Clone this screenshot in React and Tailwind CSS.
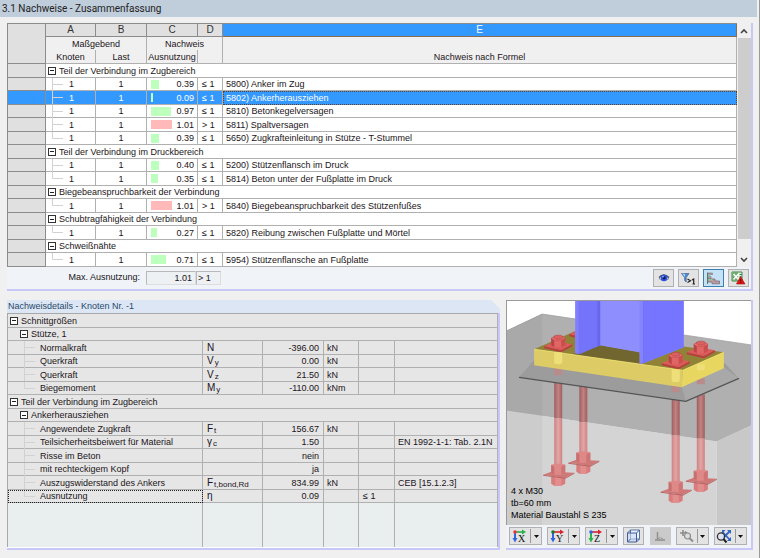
import React, { useState } from "react";

const groups = [
  {
    title: "Teil der Verbindung im Zugbereich",
    rows: [
      { value: 0.39, code: "5800", text: "Anker im Zug" },
      { value: 0.09, code: "5802", text: "Ankerherausziehen" },
      { value: 0.97, code: "5810", text: "Betonkegelversagen" },
      { value: 1.01, code: "5811", text: "Spaltversagen" },
      { value: 0.39, code: "5650", text: "Zugkrafteinleitung in Stütze - T-Stummel" },
    ],
  },
  {
    title: "Teil der Verbindung im Druckbereich",
    rows: [
      { value: 0.4, code: "5200", text: "Stützenflansch im Druck" },
      { value: 0.35, code: "5814", text: "Beton unter der Fußplatte im Druck" },
    ],
  },
  {
    title: "Biegebeanspruchbarkeit der Verbindung",
    rows: [{ value: 1.01, code: "5840", text: "Biegebeanspruchbarkeit des Stützenfußes" }],
  },
  {
    title: "Schubtragfähigkeit der Verbindung",
    rows: [{ value: 0.27, code: "5820", text: "Reibung zwischen Fußplatte und Mörtel" }],
  },
  {
    title: "Schweißnähte",
    rows: [{ value: 0.71, code: "5954", text: "Stützenflansche an Fußplatte" }],
  },
];

const details = [
  { level: 0, label: "Schnittgrößen" },
  { level: 1, label: "Stütze, 1" },
  { label: "Normalkraft", sym: "N", value: "-396.00", unit: "kN" },
  { label: "Querkraft", sym: "V", sub: "y", value: "0.00", unit: "kN" },
  { label: "Querkraft", sym: "V", sub: "z", value: "21.50", unit: "kN" },
  { label: "Biegemoment", sym: "M", sub: "y", value: "-110.00", unit: "kNm", last: true },
  { level: 0, label: "Teil der Verbindung im Zugbereich" },
  { level: 1, label: "Ankerherausziehen" },
  { label: "Angewendete Zugkraft", sym: "F", sub: "t", value: "156.67", unit: "kN" },
  { label: "Teilsicherheitsbeiwert für Material", sym: "γ", sub: "c", value: "1.50", ref: "EN 1992-1-1: Tab. 2.1N" },
  { label: "Risse im Beton", value: "nein" },
  { label: "mit rechteckigem Kopf", value: "ja" },
  { label: "Auszugswiderstand des Ankers", sym: "F", sub: "t,bond,Rd", value: "834.99", unit: "kN", ref: "CEB [15.1.2.3]" },
  { label: "Ausnutzung", sym: "η", value: "0.09", limit: "≤ 1", last: true, focused: true },
];

const Toggle = ({ label }) => (
  <button
    type="button"
    aria-label={`${label} zuklappen`}
    className="flex w-[8px] h-[8px] shrink-0 items-center justify-center border border-[#333] bg-white"
  >
    <span className="w-[4px] h-px bg-[#222]" />
  </button>
);

const TreeLine = ({ last }) => (
  <svg width="12" height="13" viewBox="0 0 12 13" className="shrink-0" aria-hidden="true">
    <path d={last ? "M.5 0V6.5H11" : "M.5 0V13M.5 6.5H11"} fill="none" stroke="#d2d2d2" />
  </svg>
);

const SummaryRow = ({ row, last, selected, onSelect }) => {
  const line = `border-b border-r border-[#b0b0b0] ${selected ? "bg-[#3399ff]" : "bg-white"}`;
  return (
    <tr
      onClick={onSelect}
      className={`odd:h-[14px] even:h-[13px] ${selected ? "text-white" : "text-[#1c1420]"}`}
    >
      <th className={`border-b border-r border-[#8c8c8c] p-0 ${selected ? "bg-[#3399ff]" : "bg-[#e0e0e0]"}`} />
      <td className={`p-0 ${line}`}>
        <div className="flex h-[12px] items-center pl-[6px]">
          <TreeLine last={last} />
          <span className="pl-[5px]">1</span>
        </div>
      </td>
      <td className={`p-0 text-center ${line}`}>1</td>
      <td className={`p-0 ${line}`}>
        <div className="flex h-[12px] items-center justify-between pl-[4px] pr-[3px]">
          <span className="flex w-[22px] shrink-0">
            <span
              className={`h-[9px] shrink-0 ${row.value > 1 ? "bg-[#ffb9b9]" : "bg-[#bdffbd]"}`}
              style={{ width: Math.round(row.value * 21) }}
            />
          </span>
          {row.value.toFixed(2)}
        </div>
      </td>
      <td className={`p-0 pl-[4px] ${line}`}>{row.value > 1 ? "> 1" : "≤ 1"}</td>
      <td
        className={`p-0 pl-[3px] ${
          selected ? "bg-[#3399ff] outline-1 -outline-offset-1 outline-dotted outline-[#6b3c14]" : line
        }`}
      >
        {row.code}) {row.text}
      </td>
    </tr>
  );
};

const SummaryTable = () => {
  const [selected, setSelected] = useState("5802");
  const letter = "h-[13px] border-b border-r border-[#8c8c8c] bg-[#e0e0e0] p-0 text-[10px] font-normal text-[#333]";
  const head = "bg-[#f0f0f0] p-0 font-normal";

  return (
    <table className="w-full table-fixed border-separate border-spacing-0 border-l border-t border-[#8c8c8c] leading-[12px]">
      <colgroup>
        <col className="w-[38px]" />
        <col className="w-[50px]" />
        <col className="w-[51px]" />
        <col className="w-[51px]" />
        <col className="w-[25px]" />
        <col />
      </colgroup>
      <thead>
        <tr>
          <th rowSpan={3} className="border-b border-r border-[#8c8c8c] bg-[#e0e0e0] p-0" />
          <th className={letter}>A</th>
          <th className={letter}>B</th>
          <th className={letter}>C</th>
          <th className={letter}>D</th>
          <th className="border-b border-r border-[#8c6a50] bg-[#3399ff] p-0 text-[10px] font-normal text-white">E</th>
        </tr>
        <tr className="h-[13px]">
          <th colSpan={2} className={`border-r border-[#b0b0b0] ${head}`}>Maßgebend</th>
          <th colSpan={2} className={`border-r border-[#b0b0b0] ${head}`}>Nachweis</th>
          <th className={`border-r border-[#b0b0b0] ${head}`} />
        </tr>
        <tr className="h-[14px]">
          <th className={`border-b border-r border-[#b0b0b0] ${head}`}>Knoten</th>
          <th className={`border-b border-r border-[#b0b0b0] ${head}`}>Last</th>
          <th className={`border-b border-r border-[#b0b0b0] ${head}`}>Ausnutzung</th>
          <th className={`border-b border-r border-[#b0b0b0] ${head}`} />
          <th className={`border-b border-r border-[#b0b0b0] ${head}`}>Nachweis nach Formel</th>
        </tr>
      </thead>
      <tbody>
        {groups.map((group) => [
          <tr key={group.title} className="odd:h-[14px] even:h-[13px]">
            <th className="border-b border-r border-[#8c8c8c] bg-[#e0e0e0] p-0" />
            <td colSpan={5} className="border-b border-r border-[#b0b0b0] bg-white p-0">
              <div className="flex h-[12px] items-center gap-[3px] pl-[2px]">
                <Toggle label={group.title} />
                {group.title}
              </div>
            </td>
          </tr>,
          ...group.rows.map((row, i) => (
            <SummaryRow
              key={row.code}
              row={row}
              last={i === group.rows.length - 1}
              selected={selected === row.code}
              onSelect={() => setSelected(row.code)}
            />
          )),
        ])}
      </tbody>
    </table>
  );
};

const ScrollBar = () => (
  <div className="flex w-[14px] shrink-0 flex-col bg-[#f0f0f0]">
    <button type="button" aria-label="Nach oben" className="flex h-[15px] items-center justify-center">
      <svg width="8" height="6" viewBox="0 0 8 6">
        <path d="M1 5L4 2L7 5" fill="none" stroke="#444" strokeWidth="1.6" />
      </svg>
    </button>
    <div className="ml-px flex-1 bg-[#cdcdcd]" />
    <button type="button" aria-label="Nach unten" className="flex h-[28px] items-end justify-center pb-[4px]">
      <svg width="8" height="6" viewBox="0 0 8 6">
        <path d="M1 1L4 4L7 1" fill="none" stroke="#444" strokeWidth="1.6" />
      </svg>
    </button>
  </div>
);

const EyeIcon = () => (
  <svg width="14" height="12" viewBox="0 0 14 12">
    <path d="M2 6.5Q6.5 1 12 6.5Q7 10.5 2 6.5Z" fill="#cdd6f2" stroke="#777d92" strokeWidth=".8" />
    <path d="M2 5.5Q6.5 0 12 5.5" fill="none" stroke="#444b60" strokeWidth="1.2" />
    <circle cx="7" cy="6" r="3.2" fill="#2853e0" />
    <circle cx="7" cy="6" r="1.4" fill="#061350" />
    <circle cx="6" cy="4.8" r=".8" fill="#bcd0ff" />
  </svg>
);

const FilterIcon = () => (
  <svg width="15" height="13" viewBox="0 0 15 13">
    <path d="M.5 1.5H8L5.2 5.5V10L3.6 8.5V5.5Z" fill="#4d8cd9" stroke="#45658f" strokeWidth=".7" />
    <path d="M1.5 1.5L3.8 5V2Z" fill="#c7e2fa" />
    <path d="M6.5 7L9.5 8.8L6.5 10.6M11 8L12.7 7V12M11.5 12H14" fill="none" stroke="#222" strokeWidth="1.2" />
  </svg>
);

const BarsIcon = () => (
  <svg width="15" height="13" viewBox="0 0 15 13">
    <path d="M2 1H6.5V2.5H2ZM2 4.5H5V7H2Z" fill="#b59ca5" stroke="#7a6d78" strokeWidth=".6" />
    <path d="M2 2.5H4V4.5H2Z" fill="#8fca94" />
    <path d="M2 7H9V9H13.5V11.8H6V10H2Z" fill="#bd9ba2" stroke="#7a6d78" strokeWidth=".8" />
    <path d="M2 7H6V8.5H2Z" fill="#8fca94" />
    <path d="M1.5 .5V12" stroke="#557a66" />
  </svg>
);

const ExcelIcon = () => (
  <svg width="15" height="14" viewBox="0 0 15 14">
    <path d="M1 1H11V10H1Z" fill="#dcefdc" stroke="#3c874a" />
    <path d="M1 1H7V10H1Z" fill="#6dab70" />
    <path d="M2.5 3L7.5 8.5M7.5 3L2.5 8.5" stroke="#fff" strokeWidth="1.5" />
    <path d="M8.5 3.5H11M8.5 6H11" stroke="#3c874a" />
    <path d="M9.5 5.5L14 13H5.5Z" fill="#e31313" stroke="#a90808" strokeWidth=".6" />
    <path d="M9.7 8V10.4M9.7 11V12" stroke="#5a0000" />
  </svg>
);

const IconButton = ({ label, active, disabled, children }) => (
  <button
    type="button"
    aria-label={label}
    disabled={disabled}
    className={`flex w-[21px] h-[18px] items-center justify-center border ${
      active ? "border-[#3c7fb1] bg-[#c4e1f5]" : disabled ? "border-[#cacaca] bg-[#cacaca]" : "border-[#b0b0b0] bg-[#e3e3e3]"
    }`}
  >
    {children}
  </button>
);

const SplitButton = ({ label, children }) => (
  <div className="flex h-[18px] w-[33px] border border-[#b0b0b0] bg-[#e3e3e3]">
    <button type="button" aria-label={label} className="flex flex-1 items-center justify-center">
      {children}
    </button>
    <button
      type="button"
      aria-label={`${label} Auswahl`}
      className="my-px flex w-[11px] items-center justify-center border-l border-[#999]"
    >
      <svg width="5" height="3" viewBox="0 0 5 3">
        <path d="M0 0H5L2.5 3Z" fill="#111" />
      </svg>
    </button>
  </div>
);

const AxisIcon = ({ across, down, letter, dot }) => (
  <svg width="16" height="15" viewBox="0 0 16 15">
    <path d="M3 3H11" stroke={across} strokeWidth="1.6" />
    <path d="M10 .5L14 3L10 5.5Z" fill={across} />
    <path d="M3 3V10" stroke={down} strokeWidth="2" />
    <path d="M.5 9H5.5L3 13.5Z" fill={down} />
    <circle cx="3" cy="3" r="1.8" fill={dot} />
    <text x="6" y="13" fontFamily="Liberation Serif, serif" fontSize="10" fill="#111">
      {letter}
    </text>
  </svg>
);

const CubeIcon = () => (
  <svg width="15" height="14" viewBox="0 0 15 14">
    <path d="M4.5 1H13.5V10H4.5Z" fill="#edf4ff" stroke="#5475a8" />
    <path d="M1.5 4H10.5V13H1.5Z" fill="#c9daf6" fillOpacity=".6" stroke="#405f96" />
    <path d="M1.5 4L4.5 1M10.5 4L13.5 1M10.5 13L13.5 10M1.5 13L4.5 10" stroke="#405f96" />
  </svg>
);

const SupportIcon = () => (
  <svg width="14" height="12" viewBox="0 0 14 12">
    <path d="M4.5 2V9M2 10H12" stroke="#8d8d8d" strokeWidth="1.4" />
    <path d="M5 9Q7.5 6 10 9" fill="none" stroke="#969696" />
  </svg>
);

const ZoomIcon = () => (
  <svg width="16" height="14" viewBox="0 0 16 14">
    <path d="M1 4H7M4 1V7M6 2.5L9 5" stroke="#8d8d8d" strokeWidth="1.6" />
    <circle cx="8.5" cy="7" r="3" fill="#ddd" stroke="#8d8d8d" strokeWidth="1.2" />
    <path d="M10.8 9.5L14 12.5" stroke="#8d8d8d" strokeWidth="2" />
  </svg>
);

const ResetIcon = () => (
  <svg width="17" height="15" viewBox="0 0 17 15">
    <path d="M6.5 3L14 11M14 2L7 9" stroke="#2e65c7" strokeWidth="1.8" />
    <path d="M11 1H15V5ZM6 1V5L9.5 1ZM11 12H15V8Z" fill="#2e65c7" />
    <circle cx="5" cy="7.5" r="3.6" fill="#d9e5f5" fillOpacity=".8" stroke="#333" strokeWidth="1.3" />
    <path d="M7.5 10L10.5 13.5" stroke="#222" strokeWidth="2" />
  </svg>
);

const SummaryPanel = () => (
  <section className="border-b-2 border-r-2 border-[#c8c8f8] bg-[#f0f4f9]">
    <div className="flex">
      <div className="min-w-0 flex-1">
        <SummaryTable />
      </div>
      <ScrollBar />
    </div>
    <div className="flex h-[22px] items-center pr-[2px]">
      <span className="w-[139px] pr-[6px] text-right">Max. Ausnutzung:</span>
      <output className="w-[50px] border border-[#b8b8b8] border-r-[#ddd] border-b-[#ddd] bg-[#eef1f4] pr-[3px] text-right leading-[12px]">
        1.01
      </output>
      <output className="w-[25px] border border-[#b8b8b8] border-r-[#ddd] border-b-[#ddd] bg-[#eef1f4] pl-px leading-[12px]">
        &gt; 1
      </output>
      <div className="ml-auto flex gap-[4px]">
        <IconButton label="Anzeigen"><EyeIcon /></IconButton>
        <IconButton label="Filter größer 1"><FilterIcon /></IconButton>
        <IconButton label="Farbbalken" active><BarsIcon /></IconButton>
        <IconButton label="Excel-Export"><ExcelIcon /></IconButton>
      </div>
    </div>
  </section>
);

const DetailRow = ({ row }) => {
  const cell = "border-b border-r border-[#b0b0b0] bg-[#e6e6e6] p-0";

  if (row.level !== undefined) {
    return (
      <tr className="odd:h-[14px] even:h-[13px]">
        <td colSpan={6} className={cell}>
          <div className={`flex h-[12px] items-center gap-[3px] ${row.level ? "pl-[12px]" : "pl-[2px]"}`}>
            <Toggle label={row.label} />
            {row.label}
          </div>
        </td>
      </tr>
    );
  }

  return (
    <tr className="odd:h-[14px] even:h-[13px]">
      <td
        className={`${cell} ${row.focused ? "outline-1 -outline-offset-1 outline-dotted outline-[#222]" : ""}`}
      >
        <div className="flex h-[12px] items-center gap-[4px] whitespace-nowrap pl-[16px]">
          <TreeLine last={row.last} />
          {row.label}
        </div>
      </td>
      <td className={`${cell} pl-[4px]`}>
        <div className="flex h-[12px] items-center text-[10px]">
          {row.sym}
          {row.sub && <sub className="static pl-px pt-[3px] align-baseline text-[8px] leading-[9px]">{row.sub}</sub>}
        </div>
      </td>
      <td className={`${cell} pr-[4px] text-right`}>{row.value}</td>
      <td className={`${cell} pl-[3px]`}>{row.unit}</td>
      <td className={`${cell} pl-[4px]`}>{row.limit}</td>
      <td className={`${cell} whitespace-nowrap pl-[3px]`}>{row.ref}</td>
    </tr>
  );
};

const DetailsPanel = () => (
  <section className="flex min-w-0 flex-1 flex-col">
    <h2 className="h-[13px] bg-[#dce6f4] pl-px leading-[13px] text-[#2a4a6c] [clip-path:polygon(0_0,calc(100%-9px)_0,100%_9px,100%_100%,0_100%)]">
      Nachweisdetails - Knoten Nr. -1
    </h2>
    <div className="flex-1 border-b-2 border-r-2 border-[#c8c8f8] bg-white pb-px">
      <table className="w-full table-fixed border-separate border-spacing-0 border-l border-t border-[#a8a8a8] leading-[12px]">
        <colgroup>
          <col className="w-[195px]" />
          <col className="w-[60px]" />
          <col className="w-[61px]" />
          <col className="w-[35px]" />
          <col className="w-[36px]" />
          <col />
        </colgroup>
        <tbody>
          {details.map((row, i) => (
            <DetailRow key={i} row={row} />
          ))}
          <tr className="h-[44px]">
            {[0, 1, 2, 3, 4, 5].map((i) => (
              <td key={i} className="border-r border-[#b0b0b0] bg-[#e8efee] p-0" />
            ))}
          </tr>
        </tbody>
      </table>
    </div>
  </section>
);

// x/y is the centre of the rod at the top of the plate
const TopNut = ({ x, y }) => (
  <g transform={`translate(${x} ${y})`}>
    <path d="M-14 1L-3 -4L14 -1L3 5Z" fill="#dd5a5a" />
    <path d="M-14 1L3 5L14 -1V1L3 7L-14 3Z" fill="#b83f3f" />
    <path d="M-7 -7L-3 -9H4L7 -7V0L3 2H-4L-7 0Z" fill="#e06565" />
    <path d="M-7 -7L-4 -5V2L-7 0Z" fill="#b84444" />
    <path d="M3 -5L7 -7V0L3 2Z" fill="#c94e4e" />
    <path d="M-7 -7L-3 -9H4L7 -7L3 -5H-4Z" fill="#ee7777" stroke="#b84444" strokeWidth=".5" />
    <ellipse cx="0" cy="-8" rx="4.5" ry="2" fill="#dc5f5f" stroke="#ad4040" strokeWidth=".5" />
  </g>
);

const BottomNut = ({ x, y }) => (
  <g transform={`translate(${x} ${y})`}>
    <path d="M-7 3H7V10L3 12H-4L-7 10Z" fill="#d87c7c" />
    <path d="M-3 3H3V12H-3Z" fill="#e38e8e" />
    <path d="M-15 1L-7 -2L16 -1L7 4Z" fill="#cf7878" />
    <path d="M-15 1L7 4L16 -1V0L7 5L-15 2Z" fill="#b86464" />
    <path d="M-7 -9L-3 -10H4L7 -9V-1L3 1H-4L-7 -1Z" fill="#df8888" />
    <path d="M-7 -9L-4 -7V1L-7 -1Z" fill="#c76e6e" />
    <path d="M3 -7L7 -9V-1L3 1Z" fill="#cd7575" />
  </g>
);

const rods = [
  { x: 77, from: 82, edge: 122, to: 152, base: 161 },
  { x: 52, from: 81, edge: 118, to: 164, base: 173 },
  { x: 194, from: 94, edge: 138, to: 170, base: 179 },
  { x: 169, from: 99, edge: 135, to: 181, base: 190 },
];

const AnchorDrawing = () => (
  <svg viewBox="1 1 243 223" className="block h-auto w-full" role="img" aria-label="Fußplatte mit Ankern">
    <defs>
      <linearGradient id="rodTop">
        <stop offset="0" stopColor="#9d5f5f" />
        <stop offset=".5" stopColor="#c48282" />
        <stop offset="1" stopColor="#9d5f5f" />
      </linearGradient>
      <linearGradient id="rodLow">
        <stop offset="0" stopColor="#cb8484" />
        <stop offset=".5" stopColor="#e5a5a5" />
        <stop offset="1" stopColor="#cb8484" />
      </linearGradient>
    </defs>
    <path d="M0 0H246V226H0Z" fill="#fff" />
    <path d="M0 110L210 141V226H0Z" fill="#d4d4d4" />
    <path d="M0 110L36 115V226H0Z" fill="#cccccc" />
    <path d="M210 141L246 124V226H210Z" fill="#c8c8c8" />
    <path d="M0 31L36 14L246 45V124L210 141L0 110Z" fill="#b0b0b0" />
    <path d="M0 31L36 14V115L0 110Z" fill="#a9a9a9" />
    <path d="M0 31L36 14L246 45" fill="none" stroke="#999" strokeWidth=".7" />

    {rods.map((rod) => (
      <g key={rod.x}>
        <rect x={rod.x - 4} y={rod.from} width="8" height={rod.edge - rod.from} fill="url(#rodTop)" />
        <rect x={rod.x - 4} y={rod.edge} width="8" height={rod.to - rod.edge + 4} fill="url(#rodLow)" />
        <BottomNut x={rod.x} y={rod.base} />
      </g>
    ))}

    <path d="M13 77L28 60L217 62L232 78L179 101Z" fill="#9c9c9c" />
    <path d="M175 86L217 67L232 78L179 101Z" fill="#a8a8a8" />
    <path d="M13 77L179 101L232 78" fill="none" stroke="#555" strokeWidth="1.3" />
    <path d="M48 66H56V75H48ZM165 84H173V92H165ZM190 78H198V84H190Z" fill="#b98b8b" />

    <path d="M28 49L69 31L217 52L176 70Z" fill="#908337" />
    <path d="M66 54L94 45L133 51V63Z" fill="#71662f" />
    <path d="M28 49L176 70L175 87L28 65Z" fill="#ddcc65" />
    <path d="M176 70L217 52V68L175 87Z" fill="#e7d660" />
    <path d="M28 49L176 70L217 52" fill="none" stroke="#f2e36f" strokeWidth=".8" />
    <path d="M48 52H56V63Q52 65 48 63ZM165 69H173V81Q169 83 165 81ZM190 64H198V69Q194 71 190 70Z" fill="#efdf78" />

    <TopNut x={77} y={33} />
    <TopNut x={52} y={45} />

    <path d="M69 0H177V47L137 63L133 52L94 45L69 53Z" fill="#8f8fff" fillOpacity=".96" />
    <path d="M73 0H94V45L73 54Z" fill="#7474fa" />
    <path d="M91 0H94V45L91 46Z" fill="#6767e7" />
    <path d="M69 0H73V54L69 53Z" fill="#8080ff" />
    <path d="M94 0H133V52L94 45Z" fill="#8e8eff" />
    <path d="M133 0H137V63L133 64Z" fill="#8484ff" />
    <path d="M137 0H177V47L137 63Z" fill="#7575ff" />
    <path d="M137 0V63M73 0V54" stroke="#6969ef" strokeWidth=".6" />

    <TopNut x={194} y={51} />
    <TopNut x={169} y={62} />
  </svg>
);

const ViewPanel = () => (
  <section className="flex w-[247px] shrink-0 flex-col border-b-2 border-r-2 border-[#c8c8f8] bg-[#f0f4f9]">
    <div className="relative border-l border-t border-[#999]">
      <AnchorDrawing />
      <p className="absolute bottom-[4px] left-[4px] leading-[12px] text-black">
        4 x M30
        <br />
        tb=60 mm
        <br />
        Material Baustahl S 235
      </p>
    </div>
    <div className="flex flex-1 items-center justify-between pl-[3px] pr-[4px]">
      <SplitButton label="Ansicht X">
        <AxisIcon across="#25b34b" down="#3465e0" dot="#e33" letter="X" />
      </SplitButton>
      <SplitButton label="Ansicht Y">
        <AxisIcon across="#d8232f" down="#3465e0" dot="#167a2c" letter="Y" />
      </SplitButton>
      <SplitButton label="Ansicht Z">
        <AxisIcon across="#d8232f" down="#25b34b" dot="#3465e0" letter="Z" />
      </SplitButton>
      <IconButton label="Isometrie"><CubeIcon /></IconButton>
      <IconButton label="Lager" disabled><SupportIcon /></IconButton>
      <SplitButton label="Zoom"><ZoomIcon /></SplitButton>
      <SplitButton label="Gesamtansicht"><ResetIcon /></SplitButton>
    </div>
  </section>
);

export default function App() {
  return (
    <main className="border-b border-r border-[#999] bg-[#f0f0f0] font-[Liberation_Sans,sans-serif] text-[9px] text-[#1c1420]">
      <h1 className="mr-[2px] h-[17px] bg-[#c0cddb] pl-[2px] font-[Roboto,sans-serif] text-[10px] leading-[17px] text-[#222]">
        3.1 Nachweise - Zusammenfassung
      </h1>
      <div className="flex flex-col gap-[9px] pb-[9px] pl-[7px] pr-[6px] pt-[6px]">
        <SummaryPanel />
        <div className="flex gap-[6px]">
          <DetailsPanel />
          <ViewPanel />
        </div>
      </div>
    </main>
  );
}
